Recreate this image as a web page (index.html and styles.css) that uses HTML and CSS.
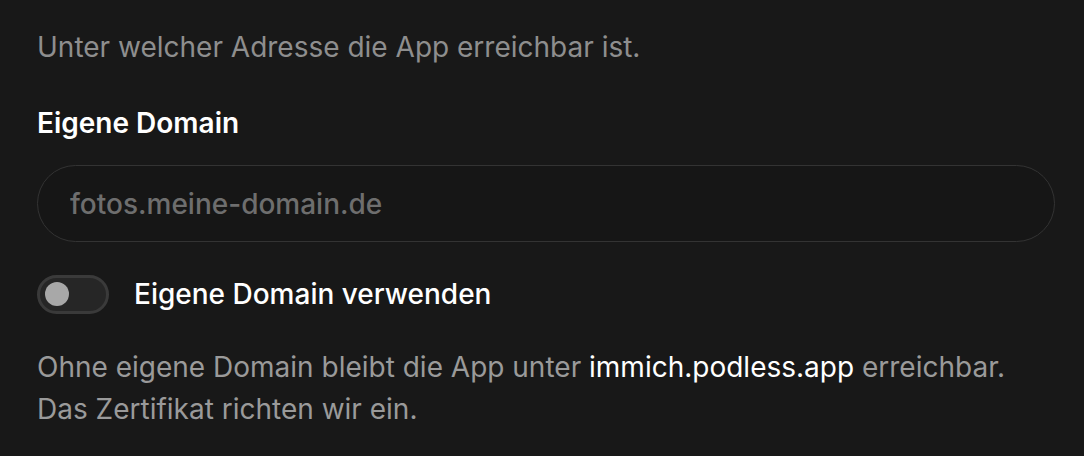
FILE: index.html
```html
<!DOCTYPE html>
<html lang="de">
<head>
  <meta charset="UTF-8">
  <title>Domain</title>
  <link rel="stylesheet" href="styles.css">
</head>
<body>
  <div class="panel">
    <p class="hint">Unter welcher Adresse die App erreichbar ist.</p>

    <label class="field-label" for="domain">Eigene Domain</label>
    <input class="domain-input" type="text" id="domain" placeholder="fotos.meine-domain.de">

    <label class="switch-row">
      <span class="switch"><span class="knob"></span></span>
      <span class="switch-text">Eigene Domain verwenden</span>
    </label>

    <p class="note">Ohne eigene Domain bleibt die App unter <strong>immich.podless.app</strong> erreichbar. Das Zertifikat richten wir ein.</p>
  </div>
</body>
</html>
```

FILE: styles.css
```css
* {
  box-sizing: border-box;
}

html, body {
  margin: 0;
  background-color: #181818;
}

body {
  font-family: Inter, 'Noto Sans', sans-serif;
  font-size: 28px;
  line-height: 1.5;
  color: #fff;
}

.panel {
  padding: 26px 29px 0 37px;
  display: flex;
  flex-direction: column;
}

.hint {
  margin: 0 0 34px;
  color: #8e8e8e;
}

.field-label {
  font-weight: 600;
  color: #fff;
  margin-bottom: 21px;
}

.domain-input {
  width: 100%;
  height: 77px;
  padding: 0 32px;
  background: #161616;
  border: 1px solid #333;
  border-radius: 40px;
  font-family: inherit;
  font-size: 28px;
  font-weight: 500;
  color: #fff;
  outline: none;
}

.domain-input::placeholder {
  color: #6e6e6e;
  font-weight: 500;
}

.switch-row {
  display: flex;
  align-items: center;
  gap: 25px;
  margin-top: 31px;
}

.switch {
  width: 72px;
  height: 39px;
  display: flex;
  align-items: center;
  padding-left: 5px;
  background: #262626;
  border: 3px solid #3a3a3a;
  border-radius: 20px;
}

.knob {
  width: 24px;
  height: 24px;
  border-radius: 50%;
  background: #a8a8a8;
}

.switch-text {
  font-weight: 500;
  color: #fff;
}

.note {
  margin: 31px 0 0;
  color: #9a9a9a;
}

.note strong {
  font-weight: 400;
  color: #fff;
}
```
